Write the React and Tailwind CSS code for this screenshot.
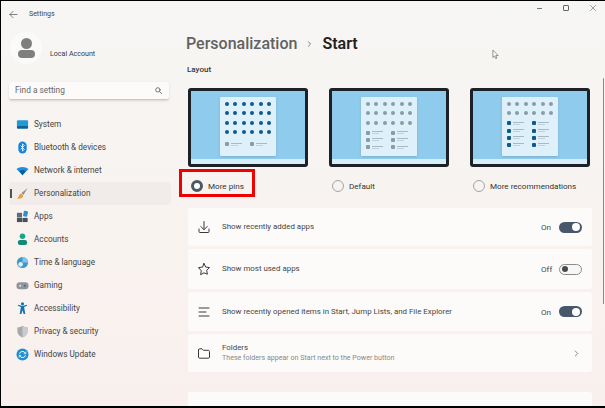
import React from 'react';

// Start menu preview inside the small monitor
function Monitor({ top, children }) {
  return (
    <div className="w-[120px] h-[79px] bg-[#8fcbec] border-[3px] border-[#1b2127] rounded-[3px] flex flex-col items-center justify-between overflow-hidden">
      <div className="w-[56px] h-[59px] mt-[6px] bg-[#def1fb] rounded-[1px] shadow-sm flex flex-col pt-[5px] px-[5px]">
        <div className="grid grid-cols-6 gap-x-[4.3px] gap-y-[5.4px]">
          {top.map((c, i) => (
            <div key={i} className={`w-[4px] h-[4px] rounded-full ${c ? 'bg-[#0f5a8d]' : 'bg-[#8a9ca8]'}`}></div>
          ))}
        </div>
        {children}
      </div>
      <div className="w-full h-[5px] bg-[#d5eef8]"></div>
    </div>
  );
}

function ListRows({ n, dark, className }) {
  const items = Array.from({ length: n * 2 });
  return (
    <div className={`grid grid-cols-[24.5px_20px] gap-y-[3.2px] ${className}`}>
      {items.map((_, i) => (
        <div key={i} className="flex items-center gap-[2px]">
          <div className={`w-[4px] h-[4px] rounded-[1px] flex-shrink-0 ${dark ? 'bg-[#0f5a8d]' : 'bg-[#8a9ca8]'}`}></div>
          <div className="flex flex-col gap-[1px]">
            <div className="w-[11px] h-[1px] bg-[#a9b8c2]"></div>
            <div className="w-[7px] h-[1px] bg-[#c4d0d8]"></div>
          </div>
        </div>
      ))}
    </div>
  );
}

function Radio({ label, selected }) {
  return (
    <div className="flex items-center gap-[5px] mt-[13px] pl-[3px]">
      {selected ? (
        <div className="w-[12px] h-[12px] rounded-full border-[3px] border-[#4d5962] bg-white flex-shrink-0"></div>
      ) : (
        <div className="w-[12px] h-[12px] rounded-full border border-[#a5a5a5] bg-[#f7f3f1] flex-shrink-0"></div>
      )}
      <span className="text-[8.1px] text-[#333]">{label}</span>
    </div>
  );
}

function Toggle({ on }) {
  return (
    <div className="flex items-center gap-[8px]">
      <span className="text-[8.1px] text-[#444] w-[10px]">{on ? 'On' : 'Off'}</span>
      {on ? (
        <div className="w-[23px] h-[11px] rounded-full bg-[#47586a] flex items-center justify-end pr-[2px]">
          <div className="w-[8px] h-[8px] rounded-full bg-white"></div>
        </div>
      ) : (
        <div className="w-[23px] h-[11px] rounded-full border border-[#8c8c8c] bg-[#f7f7f7] flex items-center pl-[2px]">
          <div className="w-[6px] h-[6px] rounded-full bg-[#4a4a4a]"></div>
        </div>
      )}
    </div>
  );
}

function Row({ icon, h, children, right }) {
  return (
    <div className={`${h} bg-[#fdfbfa] rounded-[3px] flex items-center pl-[9px] pr-[10px]`}>
      <div className="w-[14px] h-[14px] flex-shrink-0 mr-[11px] text-[#3a3a3a]">{icon}</div>
      <div className="flex-1 min-w-0">{children}</div>
      {right}
    </div>
  );
}

const stroke = { fill: 'none', stroke: 'currentColor', strokeWidth: 1, strokeLinecap: 'round', strokeLinejoin: 'round' };

const navItems = [
  {
    label: 'System',
    icon: (
      <svg viewBox="0 0 14 14" className="w-[13px] h-[13px]">
        <rect x="1" y="2.5" width="12" height="8" rx="1" fill="#1f9ad6" />
        <rect x="1" y="8.5" width="12" height="3" rx="1" fill="#14618f" />
      </svg>
    ),
  },
  {
    label: 'Bluetooth & devices',
    icon: (
      <svg viewBox="0 0 14 14" className="w-[13px] h-[13px]">
        <rect x="2.5" y="0.5" width="9" height="13" rx="4.5" fill="#1682d8" />
        <path d="M5 5l4 4-2 2V3l2 2-4 4" fill="none" stroke="#fff" strokeWidth="0.9" />
      </svg>
    ),
  },
  {
    label: 'Network & internet',
    icon: (
      <svg viewBox="0 0 14 14" className="w-[13px] h-[13px]">
        <path d="M0.5 5.5C4 2.5 10 2.5 13.5 5.5L7 12z" fill="#1f8fd8" />
        <path d="M3.5 7.5C5.5 6 8.5 6 10.5 7.5L7 12z" fill="#0f5e9c" />
      </svg>
    ),
  },
  {
    label: 'Personalization',
    active: true,
    icon: (
      <svg viewBox="0 0 14 14" className="w-[13px] h-[13px]">
        <path d="M12.5 1L6 6.5 8 8.5z" fill="#8a8f96" />
        <path d="M5.5 7C3 7.5 3.5 11 1 12.5 5 13.5 8 11.5 7.7 9z" fill="#e7a13c" />
      </svg>
    ),
  },
  {
    label: 'Apps',
    icon: (
      <svg viewBox="0 0 14 14" className="w-[13px] h-[13px]">
        <rect x="1" y="3" width="5.5" height="5" fill="#5e6b76" />
        <rect x="1" y="8.5" width="5.5" height="4.5" fill="#47525c" />
        <rect x="7" y="8.5" width="5.5" height="4.5" fill="#47525c" />
        <rect x="8" y="1" width="4.5" height="6" rx="1" transform="rotate(12 10 4)" fill="#2b8fc9" />
      </svg>
    ),
  },
  {
    label: 'Accounts',
    icon: (
      <svg viewBox="0 0 14 14" className="w-[13px] h-[13px]">
        <circle cx="7" cy="3.5" r="3" fill="#17a589" />
        <rect x="2" y="7.5" width="10" height="5.5" rx="2.5" fill="#0f8a78" />
      </svg>
    ),
  },
  {
    label: 'Time & language',
    icon: (
      <svg viewBox="0 0 14 14" className="w-[13px] h-[13px]">
        <circle cx="7" cy="7" r="6" fill="#3d97c9" />
        <path d="M7 1a6 6 0 0 1 6 6H7z" fill="#7fc6e8" />
        <circle cx="5" cy="9" r="2.5" fill="#dceef8" />
      </svg>
    ),
  },
  {
    label: 'Gaming',
    icon: (
      <svg viewBox="0 0 14 14" className="w-[13px] h-[13px]">
        <rect x="0.5" y="3.5" width="13" height="7.5" rx="3.5" fill="#8e959b" />
        <circle cx="4.5" cy="7.2" r="1.1" fill="#e3e5e7" />
        <circle cx="9.5" cy="7.2" r="1.1" fill="#5c646b" />
      </svg>
    ),
  },
  {
    label: 'Accessibility',
    icon: (
      <svg viewBox="0 0 14 14" className="w-[13px] h-[13px]">
        <circle cx="7" cy="2" r="1.7" fill="#1173b4" />
        <path d="M2 4l3.3 1.3L4 13h1.8L7 9l1.2 4H10L8.7 5.3 12 4l-.4-1L7 4.2 2.4 3z" fill="#1173b4" />
      </svg>
    ),
  },
  {
    label: 'Privacy & security',
    icon: (
      <svg viewBox="0 0 14 14" className="w-[13px] h-[13px]">
        <path d="M7 0.8c1.5 1.2 3.5 1.8 5.5 1.8v4.2C12.5 10 10 12.5 7 13.4 4 12.5 1.5 10 1.5 6.8V2.6C3.5 2.6 5.5 2 7 .8z" fill="#a6a9ab" />
        <path d="M7 .8c1.5 1.2 3.5 1.8 5.5 1.8v4.2C12.5 10 10 12.5 7 13.4z" fill="#c9cbcc" />
      </svg>
    ),
  },
  {
    label: 'Windows Update',
    icon: (
      <svg viewBox="0 0 14 14" className="w-[13px] h-[13px]">
        <circle cx="7" cy="7" r="6.5" fill="#1f8fd0" />
        <path d="M3.8 6.2A3.3 3.3 0 0 1 10 5.6M10.2 7.8A3.3 3.3 0 0 1 4 8.4" fill="none" stroke="#fff" strokeWidth="1" />
        <path d="M10.6 3.8v2.3H8.3M3.4 10.2V7.9h2.3" fill="none" stroke="#fff" strokeWidth="0.8" />
      </svg>
    ),
  },
];

const topAll = Array.from({ length: 24 }).map(() => true);
const topGrey = Array.from({ length: 18 }).map(() => false);
const topGreyTwo = Array.from({ length: 12 }).map(() => false);

export default function App() {
  return (
    <div
      className="relative w-[605px] h-[408px] overflow-hidden border-t border-l border-b-2 border-black bg-gradient-to-b from-[#f6f6f4] via-[#f8f3f0] to-[#f9f0ee] flex flex-col text-[#333]"
      style={{ fontFamily: 'Roboto, "Open Sans", sans-serif' }}
    >
      {/* Title bar */}
      <div className="h-[26px] flex items-center flex-shrink-0">
        <svg viewBox="0 0 10 10" className="w-[9px] h-[9px] ml-[8px] text-[#555]">
          <path d="M9 5H1M4.5 1.5L1 5l3.5 3.5" {...stroke} strokeWidth="0.8" />
        </svg>
        <span className="text-[7px] ml-[11px] text-[#444]">Settings</span>
        <div className="ml-auto self-start mt-[4px] flex items-center gap-[21px] pr-[9px] text-[#666]">
          <div className="w-[5px] h-[1px] bg-[#777]"></div>
          <div className="w-[6px] h-[6px] border border-[#666] rounded-[1px]"></div>
          <svg viewBox="0 0 7 7" className="w-[6px] h-[6px]">
            <path d="M.5 .5l6 6M6.5 .5l-6 6" {...stroke} strokeWidth="0.7" />
          </svg>
        </div>
      </div>

      <div className="flex flex-1 min-h-0">
        {/* Sidebar */}
        <aside className="w-[178px] flex-shrink-0 flex flex-col">
          <div className="flex items-center pl-[9px] mt-[5px]">
            <div className="w-[32px] h-[32px] rounded-full bg-[#fafaf9] flex flex-col items-center justify-center gap-[1px]">
              <div className="w-[11px] h-[11px] rounded-full bg-[#7f7f7f]"></div>
              <div className="w-[17px] h-[8px] rounded-[4px] bg-[#7f7f7f]"></div>
            </div>
            <span className="text-[7.1px] ml-[8px] mt-[12px] text-[#3a3a3a]">Local Account</span>
          </div>
          <div className="mt-[18px] ml-[8px] w-[160px] h-[18px] bg-[#fcfbfa] rounded-[3px] border-b border-[#c9c9c9] shadow-sm flex items-center pl-[6px] pr-[7px]">
            <span className="text-[8.3px] text-[#666]">Find a setting</span>
            <svg viewBox="0 0 8 8" className="w-[7px] h-[7px] ml-auto text-[#666]">
              <circle cx="3.3" cy="3.3" r="2.5" {...stroke} />
              <path d="M5.2 5.2L7.5 7.5" {...stroke} />
            </svg>
          </div>
          <nav className="mt-[13px] ml-[8px] w-[162px] flex flex-col">
            {navItems.map((item) => (
              <div
                key={item.label}
                className={`relative h-[23px] rounded-[3px] flex items-center pl-[7px] ${item.active ? 'bg-[#f1ecea]' : ''}`}
              >
                {item.active && <div className="absolute left-[1px] top-[7px] w-[1.5px] h-[9px] bg-[#4a545c]"></div>}
                <span className="w-[13px] h-[13px] flex-shrink-0">{item.icon}</span>
                <span className="text-[8.2px] ml-[5px] text-[#444] leading-none">{item.label}</span>
              </div>
            ))}
          </nav>
        </aside>

        {/* Main */}
        <main className="flex-1 min-w-0 pl-[9px] pr-[13px]">
          <h1 className="mt-[4px] -ml-[2px] h-[25px] flex items-center text-[16px] font-medium leading-none">
            <span className="text-[#626262]">Personalization</span>
            <svg viewBox="0 0 6 8" className="w-[5px] h-[6px] mx-[10px] text-[#555]">
              <path d="M1.5 1l3 3-3 3" {...stroke} />
            </svg>
            <span className="text-[#222] font-semibold">Start</span>
          </h1>
          <div className="text-[8px] font-medium mt-[10px] -ml-[1px] text-[#333] leading-none">Layout</div>

          <div className="grid grid-cols-[120px_120px_120px] gap-x-[21px] mt-[14px]">
            <Monitor top={topAll}>
              <ListRows n={1} className="mt-[8px]" />
            </Monitor>
            <Monitor top={topGrey}>
              <ListRows n={3} className="mt-[6px]" />
            </Monitor>
            <Monitor top={topGreyTwo}>
              <ListRows n={4} dark className="mt-[6px]" />
            </Monitor>
            <Radio label="More pins" selected />
            <Radio label="Default" />
            <Radio label="More recommendations" />
          </div>

          <div className="mt-[16px] flex flex-col gap-[3px]">
            <Row
              h="h-[38px]"
              icon={
                <svg viewBox="0 0 14 14" className="w-full h-full">
                  <path d="M7 1.5v8M3.8 6.5L7 9.7l3.2-3.2M2 9v2.5a1 1 0 0 0 1 1h8a1 1 0 0 0 1-1V9" {...stroke} />
                </svg>
              }
              right={<Toggle on />}
            >
              <div className="text-[7.9px] text-[#444]">Show recently added apps</div>
            </Row>
            <Row
              h="h-[40px]"
              icon={
                <svg viewBox="0 0 14 14" className="w-full h-full">
                  <path d="M7 1.5l1.7 3.6 3.8.5-2.8 2.7.7 3.9L7 10.8l-3.4 1.9.7-3.9L1.5 5.6l3.8-.5z" {...stroke} />
                </svg>
              }
              right={<Toggle />}
            >
              <div className="text-[7.9px] text-[#444]">Show most used apps</div>
            </Row>
            <Row
              h="h-[39px]"
              icon={
                <svg viewBox="0 0 14 14" className="w-full h-full">
                  <path d="M2 3h10M2 7h7M2 11h10" {...stroke} />
                </svg>
              }
              right={<Toggle on />}
            >
              <div className="text-[7.9px] text-[#444]">Show recently opened items in Start, Jump Lists, and File Explorer</div>
            </Row>
            <Row
              h="h-[38px]"
              icon={
                <svg viewBox="0 0 14 14" className="w-full h-full">
                  <path d="M1.5 4V11a1.2 1.2 0 0 0 1.2 1.2h8.6a1.2 1.2 0 0 0 1.2-1.2V5.5a1.2 1.2 0 0 0-1.2-1.2H6.5L5 2.8H2.7A1.2 1.2 0 0 0 1.5 4z" {...stroke} />
                </svg>
              }
              right={
                <svg viewBox="0 0 6 8" className="w-[5px] h-[7px] mr-[3px] text-[#555]">
                  <path d="M1.5 1l3 3-3 3" {...stroke} strokeWidth="0.8" />
                </svg>
              }
            >
              <div className="text-[7.9px] text-[#444] leading-[10px]">Folders</div>
              <div className="text-[7.1px] text-[#888] leading-[10px]">These folders appear on Start next to the Power button</div>
            </Row>
            <div className="h-[16px] mt-[17px] bg-[#fdfbfa] rounded-t-[3px]"></div>
          </div>
        </main>
      </div>

      {/* Scrollbar */}
      <div className="absolute right-[1px] top-[77px] w-[1.5px] h-[226px] bg-[#8a8a8a] rounded-full"></div>

      {/* Mouse cursor */}
      <svg viewBox="0 0 8 12" className="absolute left-[491px] top-[48px] w-[7px] h-[11px]">
        <path d="M1 1v8.5l2-1.8 1.3 3 1.3-.6-1.300-2.900h2.700z" fill="#fff" stroke="#555" strokeWidth="0.7" />
      </svg>

      {/* Red highlight round the selected option */}
      <div className="absolute left-[178px] top-[168px] w-[76px] h-[28px] border-[3px] border-[#f00000]"></div>
    </div>
  );
}
